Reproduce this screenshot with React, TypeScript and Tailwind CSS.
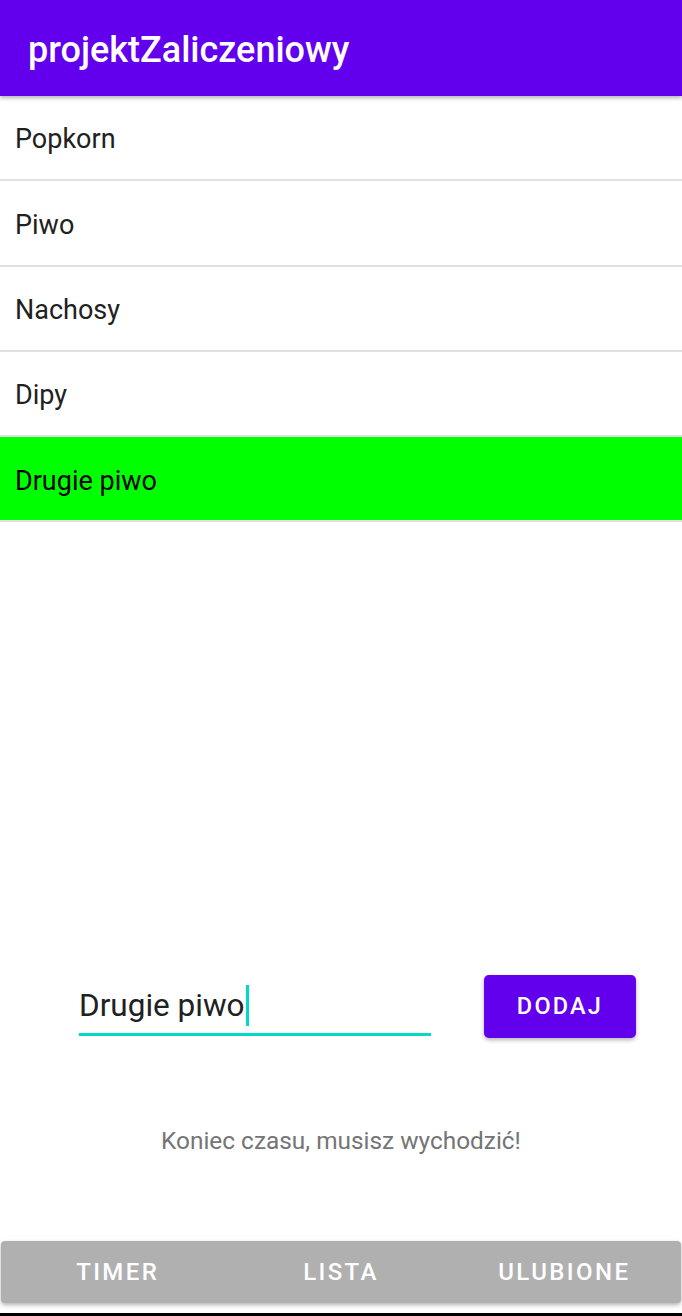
import React from 'react';

const items = ['Popkorn', 'Piwo', 'Nachosy', 'Dipy', 'Drugie piwo'];

const App: React.FC = () => {
  return (
    <div className="w-[682px] h-[1316px] bg-white flex flex-col overflow-hidden" style={{ fontFamily: 'Roboto, "Noto Sans", sans-serif' }}>
      <header className="h-[96px] bg-[#6200EE] flex items-center pl-[28px] pt-[4px] shadow-[0_2px_4px_rgba(0,0,0,0.3)] z-10 shrink-0">
        <h1 className="text-[36px] font-medium text-white">projektZaliczeniowy</h1>
      </header>

      <ul className="shrink-0">
        {items.map((item, i) => (
          <li
            key={item}
            className={`h-[85.3px] flex items-center pl-[15px] pt-[4px] text-[27px] border-b-2 border-[#e0e0e0] ${
              i === items.length - 1 ? 'bg-[#00FF00] text-black' : 'text-[#212121]'
            }`}
          >
            {item}
          </li>
        ))}
      </ul>

      <div className="flex-1" />

      <div className="h-[63px] flex pl-[79px] pr-[46px] shrink-0">
        <div className="self-end mb-[2px] w-[352px] border-b-[3px] border-[#03DAC5] pb-[7px] flex items-center">
          <span className="text-[31.5px] text-[#212121] leading-[41px]">Drugie piwo</span>
          <span className="w-[3px] h-[41px] bg-[#03DAC5] ml-[1px]" />
        </div>
        <div className="flex-1" />
        <button className="w-[152px] h-[63px] bg-[#6200EE] rounded-[5px] text-white text-[23.5px] font-medium tracking-[2.2px] shadow-[0_2px_4px_rgba(0,0,0,0.3)]">
          DODAJ
        </button>
      </div>

      <p className="text-center text-[24.4px] leading-[36px] text-[#757575] mt-[85px] mb-[82px] shrink-0">Koniec czasu, musisz wychodzić!</p>

      <nav className="mx-[1px] px-[5px] h-[62px] bg-[#B0B0B0] rounded-[4px] shadow-[0_2px_4px_rgba(0,0,0,0.3)] grid grid-cols-3 items-center text-white text-[24px] font-medium tracking-[2.4px] shrink-0">
        <span className="text-center">TIMER</span>
        <span className="text-center">LISTA</span>
        <span className="text-center">ULUBIONE</span>
      </nav>
      <div className="h-[10px] shrink-0" />
      <div className="h-[3px] bg-black shrink-0" />
    </div>
  );
};

export default App;
